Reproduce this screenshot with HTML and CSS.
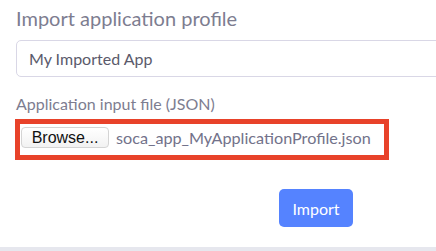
FILE: index.html
```html
<!DOCTYPE html>
<html lang="en">
<head>
  <meta charset="UTF-8">
  <title>Import application profile</title>
  <link rel="stylesheet" href="styles.css">
</head>
<body>
  <div class="panel">
    <h2 class="panel-title">Import application profile</h2>

    <div class="text-input">My Imported App</div>

    <div class="field">
      <label class="field-label">Application input file (JSON)</label>
      <div class="file-box">
        <span class="browse-btn">Browse...</span>
        <span class="file-name">soca_app_MyApplicationProfile.json</span>
      </div>
    </div>

    <div class="actions">
      <span class="import-btn">Import</span>
    </div>
  </div>
  <div class="bottom-strip"></div>
</body>
</html>
```

FILE: styles.css
```css
* {
  margin: 0;
  padding: 0;
  box-sizing: border-box;
}

html, body {
  width: 436px;
  height: 251px;
  overflow: hidden;
}

body {
  font-family: Lato, 'Noto Sans', sans-serif;
  background: #ffffff;
  color: #7b7b8f;
  display: flex;
  flex-direction: column;
}

.panel {
  flex: 1;
  padding: 5px 0 0 16px;
  display: flex;
  flex-direction: column;
}

.panel-title {
  font-size: 20px;
  font-weight: 400;
  line-height: 26px;
  color: #7d7d90;
}

.text-input {
  margin-top: 9px;
  width: 440px;
  height: 37px;
  border: 1px solid #d9d7e6;
  border-radius: 5px;
  padding: 0 12px;
  display: flex;
  align-items: center;
  font-size: 16px;
  color: #5a5a6b;
}

.field {
  margin-top: 16px;
  display: flex;
  flex-direction: column;
}

.field-label {
  font-size: 16px;
  line-height: 22px;
  color: #7d7d90;
}

.file-box {
  margin: 4px 0 0 -1px;
  width: 374px;
  height: 41px;
  border: 5px solid #e8422a;
  display: flex;
  align-items: center;
  gap: 7px;
  padding: 0 0 4px 1px;
}

.browse-btn {
  flex-shrink: 0;
  width: 88px;
  height: 21px;
  border: 1px solid #d4d4d4;
  border-radius: 4px;
  background: linear-gradient(#ffffff, #f2f2f2);
  font-family: 'Liberation Sans', Arial, sans-serif;
  font-size: 16px;
  color: #111111;
  display: flex;
  align-items: center;
  justify-content: center;
}

.file-name {
  font-size: 16.2px;
  color: #72728a;
  white-space: nowrap;
}

.actions {
  margin-top: 29px;
  padding-left: 263px;
}

.import-btn {
  display: inline-flex;
  align-items: center;
  justify-content: center;
  width: 74px;
  height: 38px;
  border-radius: 5px;
  background: #5583ff;
  color: #ffffff;
  font-size: 16px;
}

.bottom-strip {
  height: 4px;
  background: #e6e7ee;
}
```
